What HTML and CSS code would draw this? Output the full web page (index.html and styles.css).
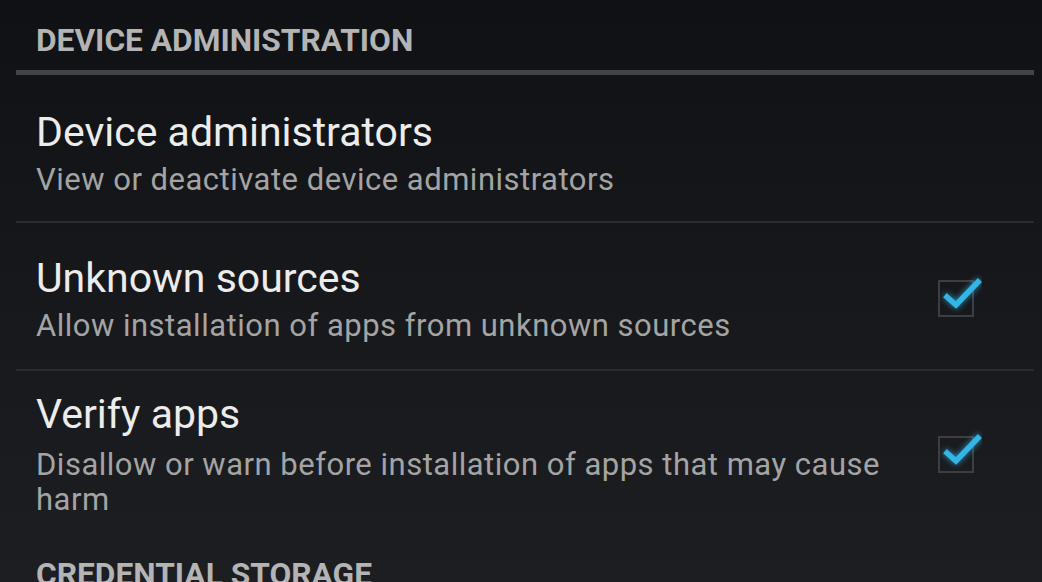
FILE: index.html
```html
<!DOCTYPE html>
<html>
<head>
<meta charset="utf-8">
<link rel="stylesheet" href="styles.css">
</head>
<body>
<div class="list">
  <div class="category">DEVICE ADMINISTRATION</div>
  <div class="pref first">
    <div class="text">
      <div class="title">Device administrators</div>
      <div class="summary">View or deactivate device administrators</div>
    </div>
  </div>
  <div class="pref second">
    <div class="text">
      <div class="title">Unknown sources</div>
      <div class="summary">Allow installation of apps from unknown sources</div>
    </div>
    <svg class="check" width="50" height="48" viewBox="0 0 50 48">
      <rect x="7" y="7" width="34" height="35" fill="none" stroke="#3c3e42" stroke-width="2"/>
      <path class="tick" d="M15 23 L24 31 L46 8" fill="none" stroke="#33b5e5" stroke-width="5.5" stroke-linecap="square" stroke-linejoin="miter"/>
    </svg>
  </div>
  <div class="pref last">
    <div class="text">
      <div class="title">Verify apps</div>
      <div class="summary">Disallow or warn before installation of apps that may cause harm</div>
    </div>
    <svg class="check" width="50" height="48" viewBox="0 0 50 48">
      <rect x="7" y="7" width="34" height="35" fill="none" stroke="#3c3e42" stroke-width="2"/>
      <path class="tick" d="M15 23 L24 31 L46 8" fill="none" stroke="#33b5e5" stroke-width="5.5" stroke-linecap="square" stroke-linejoin="miter"/>
    </svg>
  </div>
  <div class="category">CREDENTIAL STORAGE</div>
</div>
</body>
</html>
```

FILE: styles.css
```css
html, body {
  margin: 0;
  padding: 0;
}
body {
  width: 1042px;
  height: 582px;
  overflow: hidden;
  background: linear-gradient(to bottom, #0f1114 0%, #16181b 50%, #1c1e22 100%);
  font-family: Roboto, "Noto Sans", sans-serif;
}
.list {
  padding: 0 8px 0 16px;
}
.category {
  padding: 21px 0 9px 20px;
  font-size: 31.7px;
  line-height: 40px;
  font-weight: bold;
  color: #b4b4b4;
  border-bottom: 5px solid #424448;
}
.pref {
  display: flex;
  align-items: center;
  gap: 24px;
  box-sizing: border-box;
  min-height: 148px;
  padding: 19px 52px 19px 20px;
  border-bottom: 2px solid #2a2c30;
}
.pref.first {
  padding-top: 23px;
  padding-bottom: 15px;
}
.pref.second {
  padding-top: 21px;
  padding-bottom: 17px;
}
.pref.last {
  border-bottom: none;
  padding-bottom: 17px;
}
.text {
  flex: 1;
}
.title {
  font-size: 41px;
  line-height: 48px;
  color: #ececec;
  margin-bottom: 6px;
}
.pref.last .title {
  margin-bottom: 9px;
}
.summary {
  font-size: 31px;
  line-height: 35px;
  letter-spacing: 0.5px;
  color: #a4a4a4;
}
.check {
  flex: none;
  display: block;
}
.tick {
  filter: drop-shadow(0 0 3px rgba(51, 181, 229, 0.8));
}
```
